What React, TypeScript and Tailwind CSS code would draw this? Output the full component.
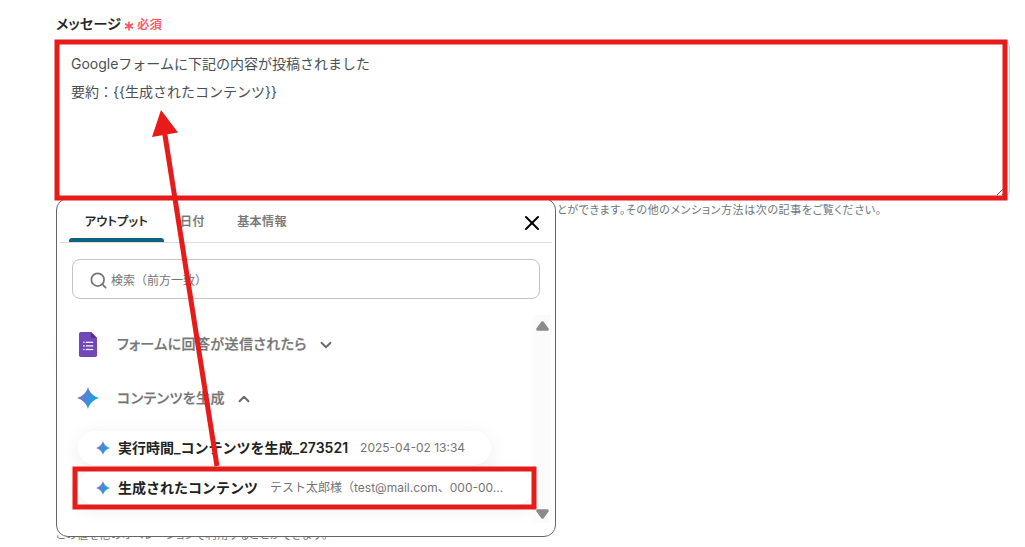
import type { ReactNode } from 'react';
import { clsx } from 'clsx';
import { ChevronDown, ChevronUp, Search, X } from 'lucide-react';

const tabs = [
  { label: 'アウトプット', className: 'w-[95px]' },
  { label: '日付', className: 'w-[57px]' },
  { label: '基本情報', className: 'w-[82px]' },
];

const outputs = [
  { name: '実行時間_コンテンツを生成_273521', value: '2025-04-02 13:34', className: 'h-[34px] w-[413px]' },
  { name: '生成されたコンテンツ', value: 'テスト太郎様（test@mail.com、000-00...', className: 'h-[35px] w-[455px]' },
];

function SparkIcon({ className }: { className: string }) {
  return (
    <svg viewBox="0 0 24 24" className={className}>
      <defs>
        <linearGradient id="spark" x1="0" y1="0" x2="1" y2="0.35">
          <stop offset="0.1" stopColor="#9168c0" />
          <stop offset="0.5" stopColor="#5684d1" />
          <stop offset="0.85" stopColor="#1ba1e3" />
        </linearGradient>
      </defs>
      <path
        fill="url(#spark)"
        d="M12 0C13.4 5.6 18.4 10.6 24 12C18.4 13.4 13.4 18.4 12 24C10.6 18.4 5.6 13.4 0 12C5.6 10.6 10.6 5.6 12 0Z"
      />
    </svg>
  );
}

function FormIcon() {
  return (
    <svg viewBox="0 0 18 25" className="h-[25px] w-[18px]">
      <path fill="#7248b9" d="M1.7 0H12L18 6V23.3A1.7 1.7 0 0 1 16.3 25H1.7A1.7 1.7 0 0 1 0 23.3V1.7A1.7 1.7 0 0 1 1.7 0Z" />
      <path fill="#4f2f91" d="M12 0L18 6H13.2A1.2 1.2 0 0 1 12 4.8Z" />
      <g fill="#fff">
        <circle cx="4.9" cy="10.3" r="0.8" />
        <circle cx="4.9" cy="13.9" r="0.8" />
        <circle cx="4.9" cy="17.5" r="0.8" />
        <rect x="6.8" y="9.7" width="7.4" height="1.2" />
        <rect x="6.8" y="13.3" width="7.4" height="1.2" />
        <rect x="6.8" y="16.9" width="7.4" height="1.2" />
      </g>
    </svg>
  );
}

function Group({ icon, title, open }: { icon: ReactNode; title: string; open?: boolean }) {
  const Chevron = open ? ChevronUp : ChevronDown;
  return (
    <div className="flex h-[54px] items-center">
      <div className="flex w-6 justify-center">{icon}</div>
      <span className="ml-[17px] text-sm font-medium tracking-[0.4px] text-[#757575] [-webkit-text-stroke:0.25px_#757575] [font-feature-settings:'palt']">
        {title}
      </span>
      <Chevron className="mt-0.5 ml-[10px] h-[18px] w-[18px] text-[#6b6b6b]" strokeWidth={2.5} />
    </div>
  );
}

function OutputPicker() {
  return (
    <div className="absolute top-[198px] left-14 h-[339px] w-[500px] rounded-xl border border-[#666] bg-white">
      {/* タブ */}
      <div className="mx-[3px] flex h-[44px] items-end border-b border-[#ddd] pr-2 pl-[9px]">
        {tabs.map(({ label, className }, i) => (
          <div
            key={label}
            className={clsx(
              'relative flex h-[43px] items-center justify-center pt-[3px] text-xs font-medium tracking-[0.4px] [font-feature-settings:"palt"]',
              i === 0
                ? 'text-[#222] [-webkit-text-stroke:0.2px_#222]'
                : 'text-[#757575] [-webkit-text-stroke:0.2px_#757575]',
              className
            )}
          >
            {label}
            {i === 0 && <span className="absolute inset-x-0 bottom-0 h-1 rounded-t-[3px] bg-[#0a6481]" />}
          </div>
        ))}
        <X className="mb-[7px] ml-auto h-6 w-6 text-black" strokeWidth={2} />
      </div>

      {/* 検索 */}
      <div className="mx-[15px] mt-4 flex h-10 items-center rounded-lg border border-[#c4c4c4] pl-4">
        <Search className="mt-0.5 h-[19px] w-[19px] text-[#757575]" strokeWidth={2.2} />
        <span className="mt-1 ml-[3px] text-xs text-[#757575]">検索（前方一致）</span>
      </div>

      <div className="mr-1 mt-4 flex h-[208px]">
        <div className="flex-1 overflow-hidden pl-[19px] pt-[2px]">
          <Group icon={<FormIcon />} title="フォームに回答が送信されたら" />
          <Group icon={<SparkIcon className="h-[22px] w-[22px]" />} title="コンテンツを生成" open />
          <div className="flex flex-col gap-[5px] pt-[6px] pl-[2px]">
            {outputs.map(({ name, value, className }) => (
              <div
                key={name}
                className={clsx(
                  'flex shrink-0 items-center rounded-full bg-white pl-[18px] whitespace-nowrap shadow-[0_4px_20px_rgba(0,0,0,0.08)]',
                  className
                )}
              >
                <SparkIcon className="h-[14px] w-[14px] shrink-0" />
                <span className="ml-2 text-sm font-semibold text-[#222]">{name}</span>
                <span className="ml-3 text-xs text-[#757575]">{value}</span>
              </div>
            ))}
          </div>
        </div>
        <div className="flex w-[18px] flex-col items-center justify-between bg-[#fbfbfb] pt-[6px] pb-1">
          <svg viewBox="0 0 13 10" className="h-[10px] w-[13px] fill-[#8b8b8b]">
            <path d="M5.5 .6Q6.5-.3 7.5 .6L12.6 7.5Q13.2 9.5 11.5 9.7H1.5Q-.2 9.5.4 7.5Z" />
          </svg>
          <svg viewBox="0 0 13 10" className="h-[10px] w-[13px] rotate-180 fill-[#8b8b8b]">
            <path d="M5.5 .6Q6.5-.3 7.5 .6L12.6 7.5Q13.2 9.5 11.5 9.7H1.5Q-.2 9.5.4 7.5Z" />
          </svg>
        </div>
      </div>
    </div>
  );
}

// 赤枠と矢印の注釈
function Annotations() {
  return (
    <svg viewBox="0 0 1025 547" className="pointer-events-none absolute inset-0 h-[547px] w-[1025px]">
      <g fill="none" stroke="#e81b1b" strokeWidth="5">
        <rect x="57" y="42" width="948" height="156" />
        <rect x="75" y="469" width="459" height="38" />
        <path d="M217 466L164.500 132" />
      </g>
      <path fill="#e81b1b" d="M161 110L178 132.500L152 137Z" />
    </svg>
  );
}

export default function App() {
  return (
    <div className="relative h-[547px] w-[1025px] overflow-hidden bg-white font-['Inter','Noto_Sans_CJK_JP',sans-serif]">
      <div className="flex h-full flex-col pl-14">
        <div className="flex h-10 items-center pt-[7px] [font-feature-settings:'palt']">
          <span className="text-sm font-medium tracking-[0.3px] text-[#222] [-webkit-text-stroke:0.25px_#222]">
            メッセージ
          </span>
          <svg viewBox="0 0 10 10" className="mt-1 ml-[3px] h-[10px] w-[10px] stroke-[#ff4d5e]" strokeWidth="1.6">
            <path d="M5 .5V9.500M1 2.700L9 7.300M9 2.700L1 7.300" />
          </svg>
          <span className="mt-0.5 ml-[3px] text-xs font-medium tracking-[0.4px] text-[#ff4d5e] [-webkit-text-stroke:0.2px_#ff4d5e]">
            必須
          </span>
        </div>

        <div className="relative h-[158px] w-[954px] rounded-lg border border-[#ccc] px-[14px] pt-[9px] text-sm leading-7 text-[#495057]">
          <p>Googleフォームに下記の内容が投稿されました</p>
          <p>{'要約：{{生成されたコンテンツ}}'}</p>
          <svg viewBox="0 0 9 9" className="absolute right-[3px] bottom-[2px] h-[9px] w-[9px] stroke-[#555]">
            <path d="M0 9L9 0M5 9L9 5" />
          </svg>
        </div>

        <p className="mt-px ml-[501px] text-[11px] leading-[22px] tracking-[0.6px] text-[#6c757d] [font-feature-settings:'palt']">
          とができます。その他のメンション方法は次の記事をご覧ください。
        </p>
        <p className="mt-[305px] text-[11px] leading-[18px] tracking-[0.5px] text-[#757575] [font-feature-settings:'palt']">
          この値を他のオペレーションで利用することができます。
        </p>
      </div>

      <div className="absolute top-[335px] left-[62px] h-[40px] w-5 rounded-full shadow-[0_0_16px_rgba(0,0,0,0.08)]" />
      <OutputPicker />
      <Annotations />
    </div>
  );
}
